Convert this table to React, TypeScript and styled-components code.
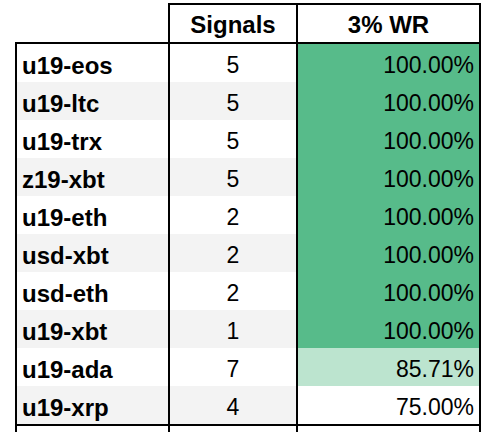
import React from 'react';
import styled, { createGlobalStyle } from 'styled-components';

const GlobalStyle = createGlobalStyle`
  html, body {
    margin: 0;
    padding: 0;
    background: #ffffff;
    overflow: hidden;
  }
  body {
    font-family: 'Liberation Sans', Arial, Helvetica, sans-serif;
    color: #000000;
  }
`;

const Sheet = styled.div`
  width: 466px;
  margin-left: 15px;
  padding-top: 3px;
`;

const HeaderRow = styled.div`
  display: grid;
  grid-template-columns: 153px 128px 185px;
  height: 39px;
  border-bottom: 2px solid #000;
`;

const HeaderCell = styled.div<{ blank?: boolean; last?: boolean }>`
  box-sizing: border-box;
  display: flex;
  align-items: flex-end;
  justify-content: center;
  padding-bottom: 4px;
  font-size: 24px;
  font-weight: 700;
  line-height: 27px;
  border-top: 2px solid ${props => (props.blank ? 'transparent' : '#000')};
  border-left: 2px solid ${props => (props.blank ? 'transparent' : '#000')};
  border-right: ${props => (props.last ? '2px solid #000' : 'none')};
`;

const Row = styled.div<{ shaded: boolean }>`
  display: grid;
  grid-template-columns: 153px 128px 185px;
  height: 38px;
  background-color: ${props => (props.shaded ? '#f3f3f3' : '#ffffff')};
`;

const Cell = styled.div`
  box-sizing: border-box;
  display: flex;
  align-items: flex-end;
  padding-bottom: 3px;
  font-size: 23px;
  line-height: 27px;
  border-left: 2px solid #000;
  white-space: nowrap;
  overflow: hidden;
`;

const NameCell = styled(Cell)`
  padding-left: 5px;
  font-size: 24px;
  font-weight: 700;
`;

const CountCell = styled(Cell)`
  justify-content: center;
`;

const RateCell = styled(Cell)<{ fill: string }>`
  justify-content: flex-end;
  padding-right: 5px;
  border-right: 2px solid #000;
  background-color: ${props => props.fill};
`;

const TailRow = styled(Row)`
  height: 6px;
  border-top: 2px solid #000;
`;

const rows = [
  { name: 'u19-eos', signals: 5, rate: 100 },
  { name: 'u19-ltc', signals: 5, rate: 100 },
  { name: 'u19-trx', signals: 5, rate: 100 },
  { name: 'z19-xbt', signals: 5, rate: 100 },
  { name: 'u19-eth', signals: 2, rate: 100 },
  { name: 'usd-xbt', signals: 2, rate: 100 },
  { name: 'usd-eth', signals: 2, rate: 100 },
  { name: 'u19-xbt', signals: 1, rate: 100 },
  { name: 'u19-ada', signals: 7, rate: 85.71 },
  { name: 'u19-xrp', signals: 4, rate: 75 },
];

// sheet colour scale: min white, max green
function scaleColor(rate: number) {
  if (rate >= 100) return '#57bb8a';
  if (rate <= 75) return '#ffffff';
  return '#bce4cf';
}

export default function App() {
  return (
    <>
      <GlobalStyle />
      <Sheet>
        <HeaderRow>
          <HeaderCell blank />
          <HeaderCell>Signals</HeaderCell>
          <HeaderCell last>3% WR</HeaderCell>
        </HeaderRow>
        {rows.map((r, i) => (
          <Row key={r.name} shaded={i % 2 === 1}>
            <NameCell>{r.name}</NameCell>
            <CountCell>{r.signals}</CountCell>
            <RateCell fill={scaleColor(r.rate)}>{r.rate.toFixed(2)}%</RateCell>
          </Row>
        ))}
        <TailRow shaded={false}>
          <NameCell />
          <CountCell />
          <RateCell fill="#ffffff" />
        </TailRow>
      </Sheet>
    </>
  );
}
